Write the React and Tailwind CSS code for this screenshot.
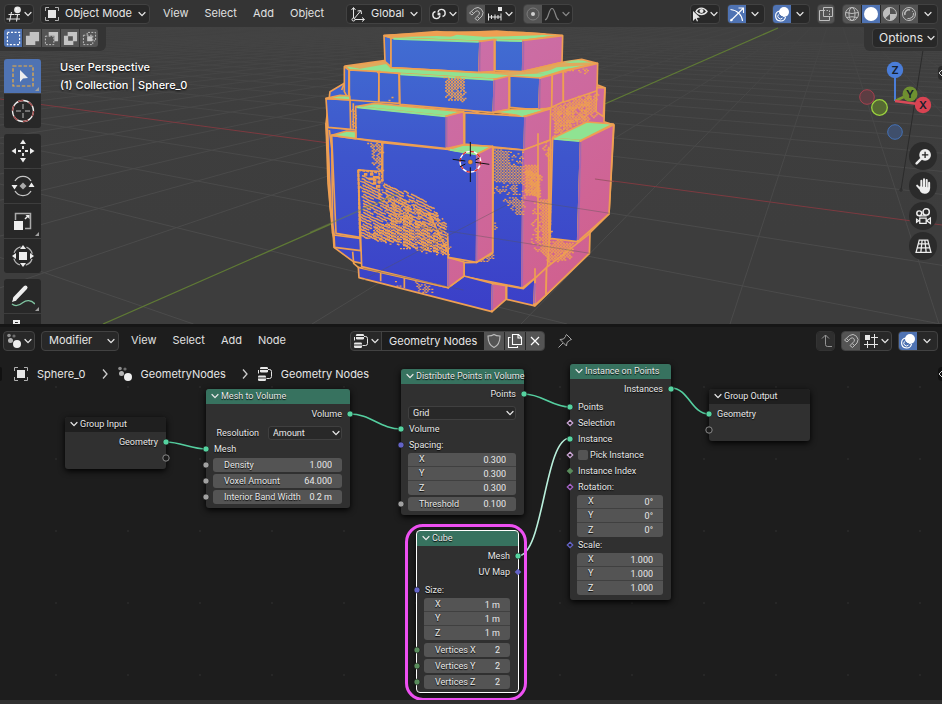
import React from "react";

const T = "#e6e6e6";

/* ---------- icons ---------- */

function Chevron({ className = "" }) {
  return (
    <svg className={"pointer-events-none shrink-0 " + className} width="8" height="8" viewBox="0 0 8 8" fill="none" stroke="currentColor" strokeWidth="1.2" strokeLinecap="round" strokeLinejoin="round">
      <path d="M1 2.5 4 5.7 7 2.5" />
    </svg>
  );
}

function Icon({ children, size = 16, className = "" }) {
  return (
    <svg className={"shrink-0 " + className} width={size} height={size} viewBox="0 0 16 16" fill="none" stroke="currentColor" strokeWidth="1">
      {children}
    </svg>
  );
}

const ViewportIcon = () => (
  <Icon>
    <path d="M2.5 8.500h6M0.5 13h13.500M5.500 6 3.500 15.500M11.500 9 10.500 15.500M9 8.500h5" strokeWidth="1.100" />
    <circle cx="11.500" cy="3.800" r="3.400" fill={T} stroke="none" />
    <circle cx="10.500" cy="2.800" r="1" fill="#fff" stroke="none" />
  </Icon>
);
const ObjectIcon = () => (
  <Icon>
    <rect x="4" y="4" width="8" height="8" fill={T} stroke="none" />
    <path d="M1.500 5V1.500H5M11 1.500h3.500V5M14.500 11v3.500H11M5 14.500H1.500V11" stroke="#b0b0b0" />
  </Icon>
);
const OrientIcon = () => (
  <Icon>
    <path d="M3.500 13.500V2M3.500 13.500H14M3.500 13.500 10.500 5M1.500 4l2-2.500 2 2.500M12 11.500l2.500 2-2.500 2M7.500 5l3.500-.5.500 3.500" />
    <circle cx="3.500" cy="13.500" r="1.500" fill="#282828" />
  </Icon>
);
const PivotIcon = () => (
  <Icon>
    <path d="M7 6.500a3.600 3.600 0 1 1 4.500 4M9 9.500a3.600 3.600 0 1 1-4.500-4" strokeWidth="1.400" />
    <circle cx="8" cy="8" r="1.600" fill={T} stroke="none" />
  </Icon>
);
const MagnetIcon = () => (
  <Icon>
    <path d="M1.500 7 6.500 2.500a5.400 5.400 0 0 1 7.500 7.500L9.500 14.500 7 12.500 11 8.500a2.300 2.300 0 0 0-3.200-3.200L4 9zM3.500 5.500l2.200 2M11.500 12.500l-2.200-2" />
  </Icon>
);
const IncrementIcon = () => (
  <Icon>
    <path d="M1.500 7.500v7M14 7.500v7M1.500 11H14M4.500 9v4M8 8.500v5M11 9v4" />
    <rect x="11" y="1" width="4" height="4" fill={T} stroke="none" />
  </Icon>
);
const ProportionalIcon = () => (
  <Icon>
    <circle cx="8" cy="8" r="6" stroke="#7c7c7c" />
    <circle cx="8" cy="8" r="2" fill="#d0d0d0" stroke="none" />
  </Icon>
);
const FalloffIcon = () => (
  <Icon>
    <path d="M1 14c4-1 3.500-11.500 7-11.500S11 13 15 14" strokeWidth="1.200" />
  </Icon>
);
const VisibilityIcon = () => (
  <Icon>
    <path d="M4 5.500C6.500 1 12 1 15 5.500 12 9.500 7 9.500 4 5.500z" strokeWidth="1.400" />
    <circle cx="9.500" cy="5" r="2" fill={T} stroke="none" />
    <path d="M1 5v10l2.500-2.500L5 15.500 6 15 4.800 12 8 11.500z" fill={T} stroke="none" />
  </Icon>
);
const GizmoIcon = () => (
  <Icon>
    <path d="M1.500 3.500C8 4 13 9 13.500 15M1.500 15 14 2.500M9.500 2h5v5" strokeWidth="1.100" />
    <circle cx="2.500" cy="14" r="1.200" fill="#fff" stroke="none" />
  </Icon>
);
const OverlayIcon = () => (
  <Icon>
    <circle cx="10" cy="6" r="5" fill="#fff" stroke="none" />
    <path d="M6 5a5 5 0 1 0 5.500 6" strokeWidth="1.200" />
    <path d="M5.500 8.500a4.600 4.600 0 0 0 3.500 2.500" stroke="#4a6da8" />
    <path d="M4.500 8.500a2.500 2.500 0 1 0 4 3.500" />
  </Icon>
);
const XrayIcon = () => (
  <Icon>
    <path d="M5.500 1.500h9v9h-9zM5.500 4.500h-4v10h10v-4" />
    <path d="M5.500 4.500h6v6" strokeDasharray="1.500 1.500" />
  </Icon>
);
const WireIcon = () => (
  <Icon>
    <circle cx="8" cy="8" r="6.500" />
    <ellipse cx="8" cy="8" rx="3" ry="6.500" />
    <path d="M1.500 6.500q6.500 2 13 0M2.500 11.500q5.500-1.500 11 0" />
  </Icon>
);
const SolidIcon = () => (
  <Icon>
    <circle cx="8" cy="8" r="7" fill="#fff" stroke="none" />
  </Icon>
);
const MaterialIcon = () => (
  <Icon>
    <circle cx="8" cy="8" r="6.500" />
    <path d="M8 8V1.500A6.500 6.500 0 0 0 3 12.500zM8 8h6.500A6.500 6.500 0 0 1 8 14.500z" fill="#bdbdbd" stroke="none" />
  </Icon>
);
const RenderIcon = () => (
  <Icon>
    <circle cx="8" cy="8" r="6.500" />
    <path d="M4 9a4 4 0 0 1 5-5" strokeWidth="1.500" />
    <path d="M12.500 7a5 5 0 0 1-6 5.500" />
    <path d="m9 13.500 4.500-4.500M11 5l1.500 1.500" strokeDasharray="1 1" />
  </Icon>
);
const NodesSystemIcon = () => (
  <Icon>
    <circle cx="3" cy="2.500" r="1.800" fill="#8e8e8e" stroke="none" />
    <circle cx="8" cy="3" r="1.600" fill="#6e6e6e" stroke="none" />
    <circle cx="4.500" cy="7.500" r="2.500" fill="#b5b5b5" stroke="none" />
    <circle cx="11" cy="11" r="4" fill="#efefef" stroke="none" />
  </Icon>
);
const NodeTreeIcon = () => (
  <Icon>
    <rect x="3" y="1" width="8" height="5.500" rx="1.200" fill={T} stroke="none" />
    <rect x="1" y="9.500" width="8" height="5.500" rx="1.200" fill={T} stroke="none" />
    <path d="M3 3.500h8M1 12h8" stroke="#2a2a2a" />
    <path d="M11 3.500h1.500a2 2 0 0 1 2 2v5a2 2 0 0 1-2 2H9.500M1.500 4v3.500" />
  </Icon>
);
const ShieldIcon = () => (
  <Icon>
    <path d="M8 1.500c2 1.400 4 1.500 6 1.500 0 6-1.500 9.500-6 11.500C3.500 12.500 2 9 2 3c2 0 4-.1 6-1.500z" strokeWidth="1.100" />
  </Icon>
);
const CopyIcon = () => (
  <Icon>
    <path d="M5.500 1.500h6l3 3v7h-9zM11 1.500v3.500h3.500M3.500 4.500h-2v10h9v-1.500" strokeWidth="1.100" />
  </Icon>
);
const CloseIcon = () => (
  <Icon>
    <path d="m4 4 8 8M12 4l-8 8" strokeWidth="1.200" />
  </Icon>
);
const PinIcon = () => (
  <Icon>
    <path d="M9.500 1.500 14.500 6.500 13 7 12.500 7.500 10 9.500 9.500 13 6 9.500 3 6.500 6.500 6 8.500 3.500 9 2zM6 10 1.500 14.500" />
  </Icon>
);
const ParentIcon = () => (
  <Icon>
    <path d="M7.500 2v9.500a2 2 0 0 0 2 2H14M4 5.500 7.500 2 11 5.500" />
  </Icon>
);
const SnapGridIcon = () => (
  <Icon>
    <path d="M4.500 8v7M11.500 1v14M8 4.500h7M1 11.500h14" />
    <rect x="2" y="2" width="5" height="5" fill={T} stroke="none" />
  </Icon>
);

/* ---------- header building blocks ---------- */

const box = "flex h-5 items-center overflow-hidden rounded-[4px] border border-[#424242] bg-[#282828] text-[#e6e6e6]";

function Picker({ label, value, className = "", icon }) {
  return (
    <div className={"relative " + box + " " + className}>
      {icon && <span className="pointer-events-none absolute left-[3px]">{icon}</span>}
      <select aria-label={label} className={"h-full w-full cursor-pointer appearance-none bg-transparent text-[11px] outline-none " + (icon ? "pl-6" : "pl-[7px]")}>
        <option>{value}</option>
      </select>
      <Chevron className="absolute right-[3px]" />
    </div>
  );
}

function IconMenu({ label, children, className = "" }) {
  return (
    <button aria-label={label} className={box + " shrink-0 justify-center gap-0.5 px-1 " + className}>
      {children}
      <Chevron />
    </button>
  );
}

function Cell({ label, on, dim, className = "", children }) {
  return (
    <button aria-label={label} className={"flex h-full items-center justify-center " + (on ? "bg-[#4f73b3] text-white " : dim ? "bg-[#545454] text-[#bdbdbd] " : "text-[#e6e6e6] ") + className}>
      {children}
    </button>
  );
}

function Menus({ items }) {
  return (
    <nav className="flex items-center gap-4">
      {items.map((m) => (
        <button key={m} className="text-[11px] text-[#e0e0e0]">{m}</button>
      ))}
    </nav>
  );
}

/* ---------- 3D viewport ---------- */

const vpX = [-754, -2];
const vpY = [835, 3];
const xLines = Array.from({ length: 30 }, (_, i) => -180 + 373.5 * i).filter((x) => Math.abs(x - 1687) > 5);
const yLines = Array.from({ length: 50 }, (_, i) => 103 + 209 * (i - 25)).filter((x) => x !== 103);

const B = "url(#blue)";
const P = "url(#pink)";
const G = "#8fe392";
const O = "#ee9f52";

const faces = [
  [P, "700,220 863,195 885,203 882,305 912,315 897,582 838,640 838,700 675,858 640,800 640,380"],
  [B, "60,215 103,190 300,200 560,300 640,390 640,800 462,790 130,725 72,682 48,310"],
  [B, "222,48 243,52 243,140 225,125"],
  [G, "222,46 420,36 640,38 756,46 640,61 555,62 510,64 243,54"],
  [B, "243,54 510,64 507,158 243,143"],
  [P, "510,64 553,58 553,154 507,158"],
  [B, "555,59 640,61 638,155 555,152"],
  [P, "640,61 758,47 756,127 638,155"],
  [B, "103,140 117,150 116,238 103,215"],
  [G, "105,138 222,122 243,143 507,158 638,155 756,127 815,118 862,130 760,152 690,174 555,178 265,160 118,150"],
  [B, "118,150 207,155 206,246 118,240"],
  [B, "207,156 267,160 268,250 207,246"],
  [B, "268,162 553,178 550,278 270,253"],
  [P, "553,178 597,168 597,268 550,278"],
  [B, "599,168 690,174 687,270 599,262"],
  [P, "690,174 727,164 725,262 687,272"],
  [P, "727,164 760,154 760,245 725,262"],
  [P, "760,154 863,130 861,212 760,247"],
  [P, "861,202 885,204 880,290 858,275"],
  [B, "52,320 137,330 137,356 65,346 68,640 78,680 60,560"],
  [B, "48,236 120,240 122,328 54,322"],
  [G, "48,235 90,226 119,228 120,240"],
  [B, "137,260 410,288 410,386 138,356"],
  [G, "137,260 195,250 460,275 410,288"],
  [P, "410,288 461,275 462,374 410,386"],
  [B, "464,278 645,289 643,390 464,372"],
  [G, "550,276 600,268 722,266 645,289"],
  [P, "645,289 722,266 720,360 643,390"],
  [B, "65,346 137,356 218,368 216,460 145,450 150,652 78,640"],
  [G, "65,346 110,333 137,335 137,356"],
  [B, "72,645 150,655 152,692 74,682"],
  [B, "550,383 640,390 638,804 462,770 462,728 500,727 548,700"],
  [P, "640,390 722,360 718,655 712,745 636,805"],
  [B, "590,797 640,806 675,775 672,857 590,838"],
  [P, "675,775 710,742 708,825 673,857"],
  [P, "710,742 840,640 838,700 708,825"],
  [B, "145,742 415,803 462,768 548,790 546,875 147,773"],
  [P, "548,790 588,797 588,838 546,875"],
  [B, "145,450 300,460 415,700 415,803 155,740"],
  [P, "415,712 462,726 462,768 415,803"],
  [B, "218,368 415,388 502,402 500,727 415,712 412,610 218,480"],
  [G, "415,388 460,375 548,379 502,402"],
  [P, "502,402 548,379 548,697 500,727"],
  [B, "728,355 812,362 803,665 720,655"],
  [G, "728,355 830,306 910,312 812,362"],
  [P, "812,362 911,314 897,582 803,665"],
];

/* Coincident faces flicker through each other: areas speckled by the selection outline. */

function makeRandom(seed) {
  let s = seed;
  return () => {
    s = (s * 1103515245 + 12345) % 2147483648;
    return s / 2147483648;
  };
}

function inside(pts, x, y) {
  let hit = false;
  for (let i = 0, j = pts.length - 1; i < pts.length; j = i++) {
    const [xi, yi] = pts[i];
    const [xj, yj] = pts[j];
    if (yi > y !== yj > y && x < ((xj - xi) * (y - yi)) / (yj - yi) + xi) hit = !hit;
  }
  return hit;
}

function bounds(pts) {
  const xs = pts.map((p) => p[0]);
  const ys = pts.map((p) => p[1]);
  return [Math.min(...xs), Math.min(...ys), Math.max(...xs), Math.max(...ys)];
}

const parse = (s) => s.split(" ").map((p) => p.split(",").map(Number));

function speckle(str, density, jitter, seed) {
  const pts = parse(str);
  const rnd = makeRandom(seed);
  const [x0, y0, x1, y1] = bounds(pts);
  let d = "";
  for (let r = 0, y = y0 - jitter; y < y1 + jitter; y += 4.5, r++) {
    for (let x = x0 - jitter + (r % 2) * 4.5; x < x1 + jitter; x += 9) {
      const jx = (rnd() - 0.5) * 2 * jitter;
      const jy = (rnd() - 0.5) * 2 * jitter;
      if (rnd() < density && inside(pts, x + jx, y + jy)) d += `M${x.toFixed(1)} ${y.toFixed(1)}h6v4h-6z`;
    }
  }
  return d;
}

function streaks(str, seed) {
  const pts = parse(str);
  const rnd = makeRandom(seed);
  const slope = 0.5;
  let d = "";
  for (let c = 200; c < 720; c += 9) {
    let x = 146 + rnd() * 14;
    while (x < 418) {
      const dash = 24 + rnd() * 60;
      let open = false;
      for (let t = x; t < x + dash; t += 4) {
        const y = c + slope * t + (rnd() - 0.5) * 3;
        if (inside(pts, t, y)) {
          d += (open ? "L" : "M") + t.toFixed(1) + " " + y.toFixed(1);
          open = true;
        } else open = false;
      }
      x += dash + 3 + rnd() * 10;
    }
  }
  return d;
}

const grain = [
  speckle("400,170 464,172 462,243 405,238", 0.95, 4, 1),
  speckle("174,362 214,370 214,450 192,440", 0.9, 7, 2),
  speckle("722,262 790,235 860,218 855,290 800,310 728,348", 0.9, 4, 3),
  speckle("735,268 850,228 830,290 740,335", 0.4, 8, 31),
  speckle("550,386 595,390 595,435 640,436 640,492 550,485", 1, 2, 4),
  speckle("595,390 640,394 640,436 595,435", 0.5, 4, 41),
  speckle("550,490 640,492 638,525 552,518", 0.4, 5, 5),
  speckle("570,532 640,532 638,592 610,580", 0.85, 5, 6),
  speckle("642,435 684,432 688,530 642,520", 1, 2, 7),
  speckle("642,437 690,470 688,532 646,526", 0.8, 4, 71),
  speckle("688,372 718,366 716,430", 0.7, 5, 8),
  speckle("664,545 690,540 690,690 664,690", 0.55, 6, 9),
  speckle("688,535 716,535 718,655 785,670 780,715 712,730 690,690", 0.95, 6, 10),
  speckle("690,540 716,537 716,650 700,700", 0.8, 3, 101),
  speckle("270,575 412,650 413,706 330,692 240,668 170,650 200,620", 0.8, 8, 11),
  speckle("215,500 300,545 380,590 400,640 230,590", 0.5, 10, 12),
  speckle("315,784 352,790 366,818 320,812", 0.9, 5, 14),
  speckle("254,780 280,785 278,800 252,797", 0.3, 6, 15),
  speckle("228,232 264,240 264,246 230,246", 0.3, 6, 16),
  speckle("505,722 546,698 546,718 520,726", 0.9, 3, 17),
  speckle("765,152 835,138 835,165 790,158", 0.5, 6, 18),
  speckle("120,252 137,258 137,326 124,320", 0.6, 3, 19),
  speckle("550,605 558,612 560,625 550,632", 1, 2, 20),
  speckle("195,150 206,152 204,165", 0.9, 3, 21),
].join("");

const hatch =
  streaks("148,456 160,458 216,520 216,488 300,518 360,548 412,612 415,706 330,690 150,652", 33) +
  speckle("150,456 206,462 206,500 170,480", 0.3, 4, 13);

function Scene() {
  return (
    <svg className="absolute inset-0 h-full w-full" viewBox="0 0 942 324" preserveAspectRatio="xMidYMid slice" aria-hidden="true">
      <defs>
        <linearGradient id="blue" gradientUnits="userSpaceOnUse" x1="0" y1="40" x2="0" y2="870">
          <stop offset="0" stopColor="#416ed2" />
          <stop offset="0.450" stopColor="#3e55cc" />
          <stop offset="1" stopColor="#3b3fc8" />
        </linearGradient>
        <linearGradient id="pink" gradientUnits="userSpaceOnUse" x1="420" y1="100" x2="850" y2="700">
          <stop offset="0" stopColor="#cb6fa8" />
          <stop offset="1" stopColor="#d06190" />
        </linearGradient>
        <linearGradient id="haze" x1="0" y1="0" x2="0" y2="1">
          <stop offset="0" stopColor="#414141" />
          <stop offset="0.150" stopColor="#414141" stopOpacity="0.800" />
          <stop offset="0.500" stopColor="#404040" stopOpacity="0.300" />
          <stop offset="1" stopColor="#404040" stopOpacity="0" />
        </linearGradient>
      </defs>
      <rect width="942" height="324" fill="#3d3d3d" />
      <g stroke="#4b4b4b" strokeWidth="1">
        {xLines.map((x) => <line key={"x" + x} x1={vpX[0]} y1={vpX[1]} x2={x} y2="324" />)}
        {yLines.map((x) => <line key={"y" + x} x1={vpY[0]} y1={vpY[1]} x2={x} y2="324" />)}
      </g>
      <rect width="942" height="230" fill="url(#haze)" />
      <path d="M0 99 942 225" stroke="#7d3a40" />
      <path d="M103 324 778 28" stroke="#5f7a35" strokeWidth="1.300" />
      <path d="M923 50 901 190" stroke="#2b2b2b" />
      <circle cx="901" cy="190" r="1.200" fill="none" stroke="#2b2b2b" />
      <g transform="translate(310 20) scale(0.33333)">
        <g stroke={O} strokeWidth="5" strokeLinejoin="round">
          {faces.map(([fill, pts], i) => <polygon key={i} fill={fill} points={pts} />)}
          <path fill="none" d="M95 210 103 190M52 330l12 260M58 330l8 60M128 695l3 35 14 12M212 752v32M283 770v34M684 340v320M716 380v260M675 745v110M48 310l6 180 14 150M130 250v76" />
        </g>
        {/* front/side edges inside one block carry no selection outline */}
        <g strokeWidth="6">
          <path d="M510 67 508 154M640 64 639 151M553 181 551 274M690 177 688 266M410 291V382M645 292 643 386M502 405 500 723M812 366 804 660M415 716V798M548 794 546 870M640 394 636 800M675 790 673 850" stroke="#a766b0" />
          <path d="M222 481 412 610V640" stroke="#3c4dca" strokeWidth="9" fill="none" />
        </g>
        <g strokeWidth="6" stroke={G}>
          <path d="M250 56 506 65M560 61 636 63M272 163 550 179M142 262 406 289M420 389 498 403M733 356 808 363M604 271 640 288" />
        </g>
        <path d="M222 45 380 32 440 36 560 31 710 40 690 46 470 52 380 48 245 52Z" fill={O} />
        <path d="M420 52 440 44 520 50 480 56Z" fill={G} />
        <path d="M105 138 220 122 230 132 150 146ZM520 160 640 157 750 130 860 127 830 136 740 142 700 160 600 166Z" fill={O} opacity="0.850" />
        <path d="M760 124 812 120 800 126ZM680 160 735 148 720 160Z" fill={G} />
        <path d={hatch} fill="none" stroke={O} strokeWidth="4.500" />
        <path d={grain} fill={O} />
        <path d="M145 450 206 458M208 458V534M145 450 150 650M216 368V490" fill="none" stroke={O} strokeWidth="6" strokeDasharray="9 3" />
        <path d="M0 637 265 520" stroke="#6f8440" strokeWidth="4" opacity="0.500" />
        <path d="M855 477 912 485" stroke="#8a4f55" strokeWidth="3" opacity="0.700" />
        <g stroke="#555" strokeWidth="3" opacity="0.400" fill="none">
          <path d="M330 620 840 700M160 780 590 555M640 540 900 580M160 745 460 810" />
        </g>
        <g fill="none" strokeWidth="4">
          <circle cx="481" cy="425" r="31" stroke="#fff" />
          <circle cx="481" cy="425" r="31" stroke="#e02a2a" strokeDasharray="12 12" />
          <path d="M481 366v43M481 442v44M428 418l38 5M496 427l42 6M450 440l16-8M496 420l12-6" stroke="#111" strokeWidth="3" />
          <circle cx="481" cy="426" r="7" fill="#f09a3c" stroke="#6b4a20" strokeWidth="1" />
        </g>
      </g>
    </svg>
  );
}

const boxModes = [
  <path key="a" d="M1.500 1.500h13v13h-13z" stroke="#fff" strokeDasharray="2.200 1.600" strokeWidth="1.200" />,
  <path key="b" d="M5 1h10v10h-4v4H1V5h4z" fill="#c4c4c4" stroke="none" />,
  <g key="c"><path d="M5 1h10v10h-4V5H5z" fill="#c4c4c4" stroke="none" /><path d="M1.500 5.500h9v9h-9z" strokeDasharray="2 1.500" /></g>,
  <path key="d" d="M5 1h10v10h-4v4H1V5h4zM5.500 5.500v5h5v-5z" fill="#c4c4c4" fillRule="evenodd" stroke="none" />,
  <g key="e"><path d="M5.500 5.500h5.500v5.500H5.500z" fill="#c4c4c4" stroke="none" /><path d="M1.500 4.500h10v10h-10zM5.500 4V1.500h9v9h-2" strokeDasharray="2 1.500" /></g>,
];

const tools = [
  [
    ["Select Box", <g key="s"><path d="M2 2h20v20H2z" stroke="#f0b040" strokeDasharray="3.500 1.800" strokeWidth="1.200" fill="none" /><path d="M9 6v12l3-3.500 5-.5z" fill="#eee" stroke="none" /></g>, true],
    ["Cursor", <g key="s"><circle cx="12" cy="12" r="10.500" stroke="#eee" strokeWidth="1.300" /><circle cx="12" cy="12" r="10.500" stroke="#a04848" strokeWidth="1.300" strokeDasharray="5.500 5.500" /><path d="M12 5v5M12 14v5M5 12h5M14 12h5" stroke="#8b8b8b" strokeWidth="1.500" /></g>],
  ],
  [
    ["Move", <g key="s"><path d="M12 7v3M12 14v3M7 12h3M14 12h3" strokeWidth="1.800" /><path d="m12 .5 3 4.500H9zM12 23.500l3-4.500H9zM.5 12 5 9v6zM23.500 12 19 9v6z" fill="#eee" stroke="none" /></g>],
    ["Rotate", <g key="s"><path d="M4 7a9.300 9.300 0 0 1 16 0M20 17a9.300 9.300 0 0 1-16 0" strokeWidth="1.300" stroke="#c4c4c4" /><path d="M.5 11h6l-3 4.500zM23.500 13h-6l3-4.500z" fill="#eee" stroke="none" /><path d="m12 8.500 3.500 3.500-3.500 3.500L8.500 12z" fill="#aaa" stroke="none" /></g>],
    ["Scale", <g key="s"><path d="M4.500 11V4.500h15v15H14" stroke="#aaa" strokeWidth="1.500" /><path d="M3 12h9v9H3z" fill="#eee" stroke="none" /><path d="m14 10 3-3" strokeWidth="1.500" /><path d="M14.500 6h4v4z" fill="#eee" stroke="none" /></g>, false, true],
    ["Transform", <g key="s"><circle cx="12" cy="12" r="9.500" stroke="#b5b5b5" strokeDasharray="9 6" strokeDashoffset="-3" strokeWidth="1.300" /><path d="M8 8h8v8H8zM12 1l3 4H9zM12 23l3-4H9zM1 12l4-3v6zM23 12l-4-3v6z" fill="#eee" stroke="none" /></g>],
  ],
  [
    ["Annotate", <g key="s"><path d="M4 14.500 14.500 3.500" strokeWidth="4" strokeLinecap="round" /><path d="m1 18 1.500-4.500 3 3z" fill="#eee" stroke="none" /><path d="M1 20c4 3.500 8 1 11-1.500s8-3 12 1.500" stroke="#7fc3a0" strokeWidth="1.300" /></g>, false, true],
    ["Measure", <g key="s"><path d="M3 2h5v3H3zM5.500 4l3 13" strokeWidth="2" /></g>],
  ],
];

function Viewport() {
  return (
    <section className="relative flex min-h-0 flex-col overflow-hidden bg-[#3d3d3d]">
      <Scene />
      <header className="relative flex h-[27px] shrink-0 items-center justify-between bg-[#343434] px-1">
        <div className="flex items-center gap-1.5">
          <IconMenu label="Editor Type" className="w-[30px]"><ViewportIcon /></IconMenu>
          <Picker label="Interaction Mode" value="Object Mode" icon={<ObjectIcon />} className="w-[110px]" />
          <div className="pl-[7px] pr-3"><Menus items={["View", "Select", "Add", "Object"]} /></div>
          <div className="flex items-center gap-[7px] pl-1">
            <Picker label="Transform Orientation" value="Global" icon={<OrientIcon />} className="w-[76px]" />
            <IconMenu label="Pivot Point" className="w-[30px]"><PivotIcon /></IconMenu>
            <div className={box}>
              <Cell label="Snap" dim className="w-[18px]"><MagnetIcon /></Cell>
              <Cell label="Snap To" className="w-[30px] gap-0.5"><IncrementIcon /><Chevron /></Cell>
            </div>
            <div className={box}>
              <Cell label="Proportional Editing" dim className="w-[18px]"><ProportionalIcon /></Cell>
              <Cell label="Falloff" className="w-[30px] gap-0.5 opacity-50"><FalloffIcon /><Chevron /></Cell>
            </div>
          </div>
        </div>
        <div className="flex items-center gap-[7px]">
          <IconMenu label="Object Types" className="w-[30px]"><VisibilityIcon /></IconMenu>
          <div className={box}>
            <Cell label="Show Gizmo" on className="w-[18px]"><GizmoIcon /></Cell>
            <Cell label="Gizmo Options" className="w-[18px]"><Chevron /></Cell>
          </div>
          <div className={box}>
            <Cell label="Show Overlays" on className="w-[18px]"><OverlayIcon /></Cell>
            <Cell label="Overlay Options" className="w-[18px]"><Chevron /></Cell>
          </div>
          <div className={box}><Cell label="Toggle X-Ray" dim className="w-4"><XrayIcon /></Cell></div>
          <div className={box + " gap-px"}>
            <Cell label="Wireframe" dim className="w-[18px]"><WireIcon /></Cell>
            <Cell label="Solid" on className="w-[18px]"><SolidIcon /></Cell>
            <Cell label="Material Preview" dim className="w-[18px]"><MaterialIcon /></Cell>
            <Cell label="Rendered" dim className="w-[18px]"><RenderIcon /></Cell>
            <Cell label="Shading Options" className="w-[18px]"><Chevron /></Cell>
          </div>
        </div>
      </header>
      <div className="relative flex shrink-0 items-start justify-between">
        <div className="h-6 rounded-br-md bg-[#343434] pl-1 pr-2 pt-0.5">
          <div className="flex h-[18px] gap-px overflow-hidden rounded-[3px]">
            {boxModes.map((m, i) => (
              <button key={i} aria-label={"Selection mode " + (i + 1)} className={"flex w-[18px] items-center justify-center text-[#c4c4c4] " + (i === 0 ? "bg-[#4f73b3]" : "bg-[#545454]")}>
                <Icon size={15}>{m}</Icon>
              </button>
            ))}
          </div>
        </div>
        <div className="h-6 rounded-bl-md bg-[#343434] pl-2 pr-1 pt-px">
          <button className={box + " w-[66px] justify-between pl-1.5 pr-0.5 text-[12px]"}>Options <Chevron /></button>
        </div>
      </div>
      <div className="relative flex min-h-0 flex-1 items-start justify-between">
        <div className="flex items-start gap-[19px] pl-1">
          <div className="flex w-[37px] flex-col gap-1.5 pt-2">
            {tools.map((group, gi) => (
              <div key={gi} className="flex flex-col gap-px overflow-hidden rounded-[3px]">
                {group.map(([name, art, on, more]) => (
                  <button key={name} aria-label={name} className={"relative flex h-[34px] items-center justify-center " + (on ? "bg-[#4f73b3]" : "bg-[#282828]")}>
                    <svg width="24" height="24" viewBox="0 0 24 24" fill="none" stroke="#eee">{art}</svg>
                    {(on || more) && <svg className="absolute bottom-0.5 right-0.5" width="4" height="4" viewBox="0 0 4 4"><path d="M4 0v4H0z" fill="#a0a0a0" /></svg>}
                  </button>
                ))}
              </div>
            ))}
          </div>
          <div className="pt-[7px] text-[11px] font-medium leading-[18px] text-white [text-shadow:0_1px_2px_#000]">
            <p>User Perspective</p>
            <p>(1) Collection | Sphere_0</p>
          </div>
        </div>
        <div className="flex flex-col items-end pr-[5px] pt-[7px]">
          <svg width="80" height="84" viewBox="0 0 80 84" aria-label="Navigation gizmo">
            <path d="M38 43V16" stroke="#4a7dd8" strokeWidth="2" />
            <path d="m38 43 13-6" stroke="#79982f" strokeWidth="2.500" />
            <path d="m38 43 23 3" stroke="#d84a58" strokeWidth="2.500" />
            <circle cx="10" cy="39" r="7.300" fill="#5c3d42" stroke="#a8404e" />
            <circle cx="38" cy="74" r="7.300" fill="#3f4f6c" stroke="#4472b8" />
            <circle cx="53" cy="36" r="7.500" fill="#6f9030" />
            <circle cx="22.500" cy="49.500" r="7.800" fill="#566a32" stroke="#9bd23e" strokeWidth="1.300" />
            <circle cx="38" cy="12" r="8.200" fill="#4a7dd8" />
            <circle cx="66" cy="47" r="8.200" fill="#d84352" />
            <g fill="#16202c" fontSize="11" fontWeight="600" textAnchor="middle">
              <text x="38" y="16">Z</text>
              <text x="53" y="40">Y</text>
              <text x="66" y="51">X</text>
            </g>
          </svg>
          <div className="flex flex-col gap-0.5">
            {[
              ["Zoom", <g key="z"><circle cx="9.500" cy="6.500" r="5.500" fill="#eee" stroke="none" /><path d="M9.500 3.500v6M6.500 6.500h6" stroke="#222" strokeWidth="1.200" /><path d="M5.500 10.500 1.500 14.500" strokeWidth="2.200" strokeLinecap="round" /></g>],
              ["Pan", <path key="p" d="M4.500 10 2 7.200M6 9V2.500M8.500 8V1.200M11 8.500V2M13.300 9.500V4.500M5 9c0 6 8 7 8.300.5z" strokeWidth="1.900" strokeLinecap="round" fill="#eee" />],
              ["Camera", <g key="c"><circle cx="4" cy="5" r="2.300" strokeWidth="1.400" /><circle cx="10.500" cy="3.700" r="3" strokeWidth="1.400" /><path d="M4 7.500h7M4.500 9.500h6v5h-6zM14.500 9.500v5L11 12zM1.500 10.500v3l2-1.500z" strokeWidth="1.200" /></g>],
              ["Perspective", <path key="g" d="M4 2h8l3 11.500H1zM6.700 2 5.500 13.500M9.300 2 10.500 13.500M3.300 5.500h9.400M2.200 9.200h11.600" strokeWidth="1.200" />],
            ].map(([n, a]) => (
              <button key={n} aria-label={n} className="flex size-7 items-center justify-center rounded-full bg-[#2b2b2b] text-[#eee]">
                <Icon size={17}>{a}</Icon>
              </button>
            ))}
          </div>
        </div>
      </div>
      <button aria-label="Show sidebar" className="absolute right-0 top-[66px] h-3.5 w-1 overflow-hidden rounded-l bg-[#2b2b2b] text-[#ccc]">
        <svg width="4" height="8" viewBox="0 0 4 8" fill="none" stroke="currentColor"><path d="M4 1 1 4l3 3" /></svg>
      </button>
    </section>
  );
}

/* ---------- node editor ---------- */

const sock = { geo: "#55d3a0", float: "#a1a1a1", vec: "#6363c7", int: "#598c5c", bool: "#cca6d6", rot: "#a663c7" };

function Socket({ kind, shape = "dot", side = "left" }) {
  const c = sock[kind];
  return (
    <svg className={"absolute top-1/2 -translate-y-1/2 " + (side === "left" ? "-left-1" : "-right-1")} width="8" height="8" viewBox="0 0 8 8">
      {shape === "dot" && <circle cx="4" cy="4" r="3" fill={c} stroke="#1a1a1a" strokeWidth="0.600" />}
      {shape === "hollow" && <circle cx="4" cy="4" r="3.200" fill="#1d1d1d" stroke="#8a8a8a" />}
      {shape === "diamond" && <path d="m4 .7 3.300 3.300L4 7.300.7 4z" fill={c} />}
      {shape === "ring" && <path d="m4 1.300 2.700 2.700L4 6.700 1.300 4z" fill="#1d1d1d" stroke={c} strokeWidth="1.300" />}
    </svg>
  );
}

function Out({ children, kind = "geo", shape }) {
  return (
    <div className="relative flex h-4 items-center justify-end px-2">
      {children}
      <Socket kind={kind} shape={shape} side="right" />
    </div>
  );
}

function In({ children, kind = "geo", shape }) {
  return (
    <div className="relative flex h-4 items-center gap-1 px-2">
      <Socket kind={kind} shape={shape} />
      {children}
    </div>
  );
}

function Num({ label, value, className = "" }) {
  return (
    <label className={"flex h-3.5 w-full items-center justify-between bg-[#545454] pl-[11px] pr-2.5 " + className}>
      <span className="whitespace-nowrap">{label}</span>
      <input type="text" defaultValue={value} className="h-full w-8 min-w-0 bg-transparent text-right outline-none" />
    </label>
  );
}

function Field({ label, value, kind = "float" }) {
  return (
    <div className="relative flex h-4 items-center pl-[7px] pr-2">
      <Socket kind={kind} />
      <Num label={label} value={value} className="rounded-[3px]" />
    </div>
  );
}

function Vector({ values }) {
  return (
    <div className="pl-[7px] pr-2">
      <div className="flex flex-col overflow-hidden rounded-[3px]">
        {["X", "Y", "Z"].map((a, i) => (
          <Num key={a} label={a} value={values[i]} className={i < 2 ? "border-b border-[#404040]" : ""} />
        ))}
      </div>
    </div>
  );
}

function NodeSelect({ label, value, className = "" }) {
  return (
    <div className={"relative flex h-3.5 items-center rounded-[3px] border border-[#404040] bg-[#282828] " + className}>
      <select aria-label={label} className="h-full w-full appearance-none bg-transparent pl-1 outline-none">
        <option>{value}</option>
      </select>
      <Chevron className="absolute right-px" />
    </div>
  );
}

function Node({ title, dark, className = "", children }) {
  return (
    <article className={"absolute rounded-[3px] bg-[#303030] shadow-[0_2px_6px_#000] " + className}>
      <h2 className={"flex h-[15px] items-center gap-0.5 whitespace-nowrap rounded-t-[3px] pb-px pl-[5px] " + (dark ? "bg-[#1f1f1f]" : "bg-[#37725f]")}>
        <Chevron />
        {title}
      </h2>
      <div className="pt-0.5">{children}</div>
    </article>
  );
}

function Crumb({ icon, children }) {
  return (
    <span className="flex items-center gap-2">{icon}{children}</span>
  );
}

function Sep() {
  return (
    <svg width="6" height="10" viewBox="0 0 6 10" fill="none" stroke="#ccc" strokeWidth="1.300"><path d="m1 .5 4 4.500-4 4.500" /></svg>
  );
}

function NodeEditor() {
  return (
    <section className="relative min-h-0 overflow-hidden border-b-4 border-[#303030] bg-[#1d1d1d]">
      <div className="absolute inset-0 bg-[radial-gradient(circle,#272727_1px,transparent_1px)] bg-[size:72px_72px] bg-[position:20px_27px]" />
      <svg className="absolute inset-0 h-full w-full overflow-visible" aria-hidden="true" fill="none" stroke="#55cfa0" strokeWidth="1.600">
        <path d="M166 118c14 0 26 7 40 7M350 90c20 0 31 15 51 15M524 70c18 0 28 13 46 13M671 64c18 0 20 26 38 26" />
        <path d="M518 232c26 0 26-118 52-118" stroke="#b9f0dc" />
      </svg>

      <div className="font-['Roboto','Liberation_Sans',sans-serif] text-[9px] leading-none text-[#e8e8e8] [text-shadow:0_1px_1px_#000]">
        <Node title="Group Input" dark className="left-[65px] top-[93px] w-[101px] pb-[3px]">
          <Out>Geometry</Out>
          <Out shape="hollow" />
        </Node>

        <Node title="Mesh to Volume" className="left-[206px] top-[65px] w-36 pb-[3px]">
          <Out>Volume</Out>
          <div className="mt-[3px] flex h-4 items-center gap-[9px] pr-2">
            <span className="flex-1 text-right">Resolution</span>
            <NodeSelect label="Resolution" value="Amount" className="w-[74px]" />
          </div>
          <In>Mesh</In>
          <Field label="Density" value="1.000" />
          <Field label="Voxel Amount" value="64.000" />
          <Field label="Interior Band Width" value="0.2 m" />
        </Node>

        <Node title="Distribute Points in Volume" className="left-[401px] top-[45px] w-[123px] pb-[3px]">
          <Out>Points</Out>
          <div className="mt-[3px] flex h-4 items-center pl-[7px] pr-2">
            <NodeSelect label="Mode" value="Grid" className="w-full" />
          </div>
          <In>Volume</In>
          <In kind="vec">Spacing:</In>
          <Vector values={["0.300", "0.300", "0.300"]} />
          <div className="pt-px"><Field label="Threshold" value="0.100" /></div>
        </Node>

        <Node title="Instance on Points" className="left-[570px] top-[40px] w-[101px] pb-[5px]">
          <Out>Instances</Out>
          <div className="pt-0.5">
            <In>Points</In>
            <In kind="bool" shape="ring">Selection</In>
            <In>Instance</In>
            <In kind="bool" shape="ring">
              <label className="flex items-center gap-0.5">
                <input type="checkbox" className="size-2.5 appearance-none rounded-[2px] bg-[#545454]" />
                Pick Instance
              </label>
            </In>
            <In kind="int" shape="diamond">Instance Index</In>
            <In kind="rot" shape="ring">Rotation:</In>
          </div>
          <Vector values={["0°", "0°", "0°"]} />
          <In kind="vec" shape="ring">Scale:</In>
          <Vector values={["1.000", "1.000", "1.000"]} />
        </Node>

        <Node title="Group Output" dark className="left-[709px] top-[65px] w-[101px] pb-[3px]">
          <In>Geometry</In>
          <In shape="hollow" />
        </Node>

        <Node title="Cube" className="left-[417px] top-[207px] w-[101px] pb-0.5 outline outline-white">
          <Out>Mesh</Out>
          <Out kind="vec" shape="diamond">UV Map</Out>
          <div className="pt-0.5"><In kind="vec">Size:</In></div>
          <Vector values={["1 m", "1 m", "1 m"]} />
          <div className="pt-0.5">
            <Field kind="int" label="Vertices X" value="2" />
            <Field kind="int" label="Vertices Y" value="2" />
            <Field kind="int" label="Vertices Z" value="2" />
          </div>
        </Node>
      </div>
      <div className="pointer-events-none absolute left-[405px] top-[200px] h-[177px] w-[122px] rounded-[18px] border-3 border-[#ee50f2]" />

      <header className="relative flex h-[30px] items-center justify-between border-t-3 border-[#161616] pl-[3px] pr-1">
        <div className="flex items-center gap-1.5">
          <IconMenu label="Editor Type" className="w-8"><NodesSystemIcon /></IconMenu>
          <Picker label="Node Tree Sub-Type" value="Modifier" className="w-[78px]" />
          <div className="pl-1.5"><Menus items={["View", "Select", "Add", "Node"]} /></div>
        </div>
        <div className="flex flex-1 items-center gap-3 pl-16">
          <div className={box}>
            <Cell label="Browse Node Tree" className="w-[30px] gap-0.5"><NodeTreeIcon /><Chevron /></Cell>
            <input type="text" aria-label="Node Tree Name" defaultValue="Geometry Nodes" className="h-full w-[103px] border-l border-[#424242] bg-[#1d1d1d] pl-[7px] text-[11px] outline-none" />
            <div className="flex h-full gap-px">
              <Cell label="Fake User" dim className="w-5"><ShieldIcon /></Cell>
              <Cell label="New Node Tree" dim className="w-5 text-white"><CopyIcon /></Cell>
              <Cell label="Unlink" dim className="w-[18px] text-white"><CloseIcon /></Cell>
            </div>
          </div>
          <button aria-label="Pin" className="text-[#a8a8a8]"><PinIcon /></button>
        </div>
        <div className="flex items-center gap-1.5">
          <div className={box + " opacity-60"}><Cell label="Parent Node Tree" className="w-[17px] bg-[#3a3a3a]"><ParentIcon /></Cell></div>
          <div className={box}>
            <Cell label="Snap" dim className="w-[18px]"><MagnetIcon /></Cell>
            <Cell label="Snap Target" className="w-[31px] gap-0.5"><SnapGridIcon /><Chevron /></Cell>
          </div>
          <div className={box}>
            <Cell label="Overlays" on className="w-[18px]"><OverlayIcon /></Cell>
            <Cell label="Overlay Options" className="w-5"><Chevron /></Cell>
          </div>
        </div>
      </header>
      <div className="relative flex w-max items-center gap-4 pl-[13px] pt-3 text-[11px] leading-4 text-[#e6e6e6]">
        <Crumb icon={<ObjectIcon />}>Sphere_0</Crumb>
        <Sep />
        <span className="-ml-[7px]"><Crumb icon={<NodesSystemIcon />}>GeometryNodes</Crumb></span>
        <Sep />
        <span className="-ml-[7px]"><Crumb icon={<NodeTreeIcon />}>Geometry Nodes</Crumb></span>
      </div>
      <button aria-label="Show sidebar" className="absolute right-0 top-[43px] h-3.5 w-1 overflow-hidden rounded-l bg-[#111] text-[#ccc]">
        <svg width="4" height="8" viewBox="0 0 4 8" fill="none" stroke="currentColor"><path d="M4 1 1 4l3 3" /></svg>
      </button>
      <button aria-label="Show toolbar" className="absolute left-0 top-[43px] h-3.5 w-0.5 overflow-hidden rounded-r bg-[#111] text-[#ccc]" />
    </section>
  );
}

export default function App() {
  return (
    <main className="grid h-screen grid-rows-[324fr_380fr] overflow-hidden bg-[#161616] font-['Inter','Liberation_Sans',sans-serif] text-[#e6e6e6]">
      <Viewport />
      <NodeEditor />
    </main>
  );
}
